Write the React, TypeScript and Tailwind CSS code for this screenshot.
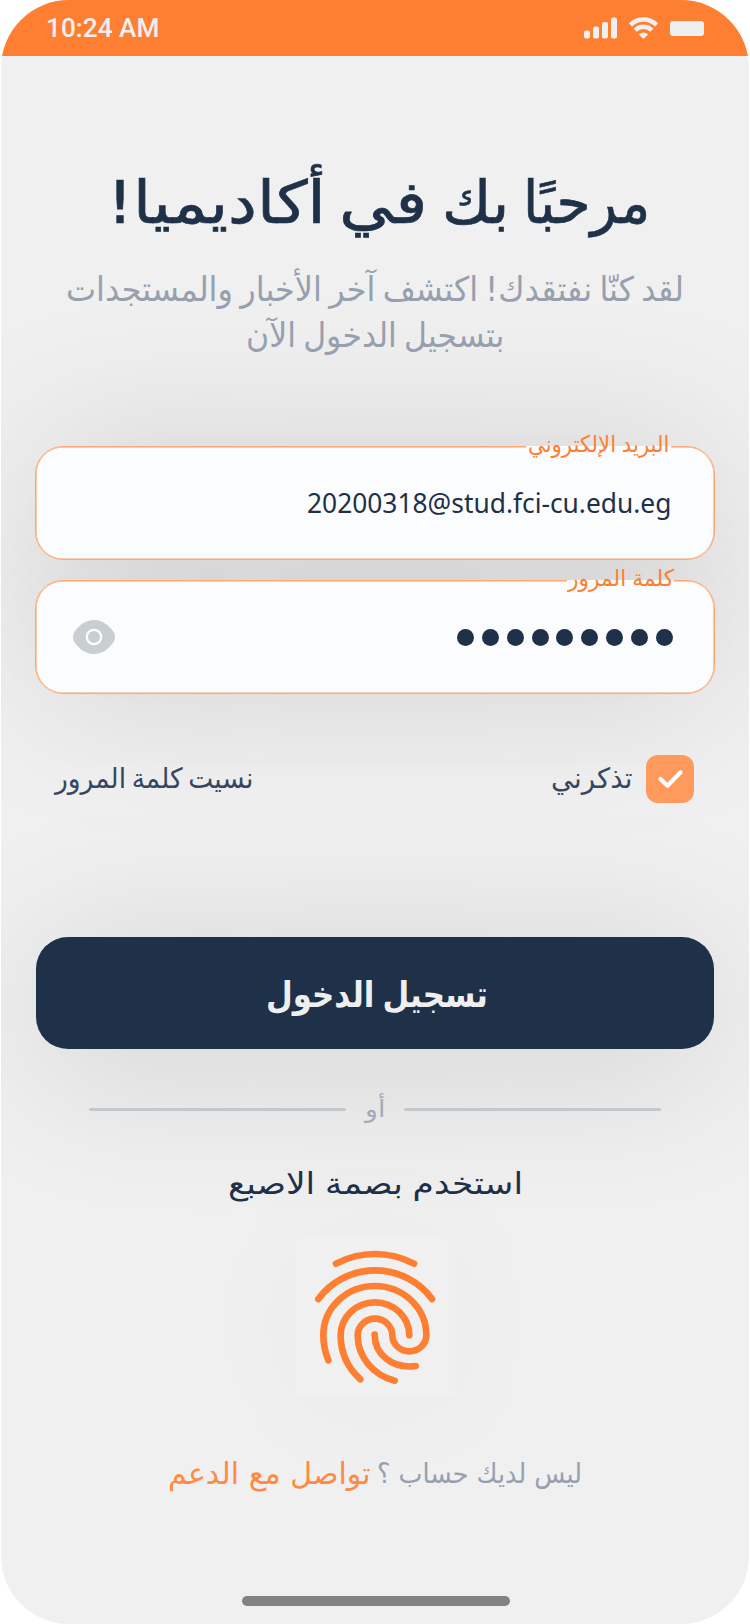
import { useLayoutEffect, useRef, useState } from "react";
import type { ReactNode } from "react";

/** One line of text stretched or condensed horizontally to fill the width of its box. */
function FitLine({ className, children, dir = "rtl" }: { className: string; children: ReactNode; dir?: "rtl" | "ltr" }) {
  const box = useRef<HTMLDivElement>(null);
  const line = useRef<HTMLSpanElement>(null);
  const [ratio, setRatio] = useState(1);
  useLayoutEffect(() => {
    if (box.current && line.current) {
      setRatio(box.current.offsetWidth / line.current.offsetWidth);
    }
  }, []);
  return (
    <div ref={box} dir="ltr" className={`shrink-0 whitespace-nowrap ${className}`}>
      <span ref={line} dir={dir} className="inline-block origin-left" style={{ transform: `scaleX(${ratio})` }}>
        {children}
      </span>
    </div>
  );
}

function StatusBar() {
  return (
    <div className="flex h-14 shrink-0 items-center justify-between bg-[#ff7f32] pr-[45px] pl-[45px] text-[#efefef]">
      <FitLine dir="ltr" className="w-[113px] font-['Roboto',sans-serif] text-[26px] leading-[56px] font-medium">
        10:24 AM
      </FitLine>
      <div className="flex items-center">
        <svg className="mr-3 h-[22px] w-[33px]" viewBox="0 0 33 22" fill="currentColor">
          <rect x="0" y="13.5" width="6" height="8" rx="2" />
          <rect x="9" y="9.5" width="6" height="12" rx="2" />
          <rect x="18" y="5" width="6" height="16.5" rx="2" />
          <rect x="27" y="0.5" width="6" height="21" rx="2" />
        </svg>
        <svg className="mr-3 h-[22px] w-[29px]" viewBox="0 0 29 22" fill="none" stroke="currentColor" strokeWidth="4.4">
          <path d="M1.5 7.9A18.5 18.5 0 0 1 27.5 7.9" />
          <path d="M6.2 13.2A11.6 11.6 0 0 1 22.8 13.2" />
          <path d="M14.5 22L9.9 17.4A6.6 6.6 0 0 1 19.1 17.4Z" fill="currentColor" stroke="none" />
        </svg>
        <div className="h-[15px] w-[34px] rounded-[3px] bg-[#efefef]" />
      </div>
    </div>
  );
}

function Eye() {
  return (
    <svg className="h-[34px] w-[42px]" viewBox="0 0 42 34">
      <path d="M21 0C31 0 37 7 40.6 12Q43.4 17 40.6 22C37 27 31 34 21 34S5 27 1.4 22Q-1.4 17 1.4 12C5 7 11 0 21 0Z" fill="#c9cfcf" />
      <circle cx="21" cy="17" r="7.2" fill="none" stroke="#fbfcfe" strokeWidth="2.3" />
    </svg>
  );
}

function Fingerprint() {
  return (
    <div className="mx-auto size-40 shrink-0 bg-[#f0f0f0] shadow-[0_4px_160px_rgba(0,0,0,0.03)]">
      <svg className="size-40" viewBox="0 0 480 480" fill="none" stroke="#ff7f32" strokeWidth="20" strokeLinecap="round">
        <path d="M123 80A250 250 0 0 1 357 80" />
        <path d="M70 186A212 212 0 0 1 411 186" />
        <path d="M100 370C90 345 85 320 85 295A154.5 148 0 0 1 394 295A51 48 0 0 1 292 295A52 50 0 0 0 188 295C188 360 235 415 299 431" />
        <path d="M196 427C155 390 137 345 137 295A103 99 0 0 1 343 295" />
        <path d="M239 293C239 350 290 397 362 387" />
      </svg>
    </div>
  );
}

/** Soft shadow the size of a field, kept behind both fields. */
function FieldShadow({ className }: { className: string }) {
  return <div className={`absolute inset-x-[34px] h-[114px] rounded-[28px] ${className}`} />;
}

const fieldClass =
  "relative flex h-[114px] shrink-0 items-center rounded-[28px] border border-[#ffa673] bg-[#fbfcfe] shadow-[inset_0_0_0_0.6px_#ffa673]";

export default function App() {
  return (
    <div className="h-[1624px] w-[750px] bg-white px-px font-['DejaVu_Sans',sans-serif] text-[#1e3148]">
      <div className="flex h-[1624px] w-[748px] flex-col overflow-hidden rounded-[68px] bg-[#f0f0f0]">
        <StatusBar />

        <h1 dir="rtl" className="z-10 mt-[107px] mr-[99px] flex text-[59px] leading-[80px] [-webkit-text-stroke:0.7px_#1e3148]">
          <FitLine className="w-[127px]">مرحبًا</FitLine>
          <FitLine className="mr-3.5 w-[67px]">بك</FitLine>
          <FitLine className="mr-[15px] w-[88px]">في</FitLine>
          <FitLine className="mr-[13px] w-[219px]">أكاديميا!</FitLine>
        </h1>

        <div className="z-10 mt-[23px] text-[34px] leading-[46px] text-[#96a0af] [word-spacing:-3px]">
          <FitLine className="ml-[65px] w-[618px]">لقد كنّا نفتقدك! اكتشف آخر الأخبار والمستجدات</FitLine>
          <FitLine className="ml-[245px] w-[258px]">بتسجيل الدخول الآن</FitLine>
        </div>

        <form className="relative mt-[88px] flex flex-col gap-5 px-[34px]">
          <FieldShadow className="top-0 shadow-[0_0_160px_rgba(0,0,0,0.13)]" />
          <FieldShadow className="top-[134px] shadow-[0_0_160px_rgba(0,0,0,0.13)]" />
          <div className={`${fieldClass} justify-end pr-[43px]`}>
            <div className="absolute -top-px right-[43px] h-0.5 w-[145px] bg-[#fbfcfe]" />
            <div className="absolute -top-[18px] right-[45px] text-[23px] leading-[30px] text-[#ff7f32] [word-spacing:-1px]">
              <FitLine className="w-[141px]">البريد الإلكتروني</FitLine>
            </div>
            <FitLine dir="ltr" className="w-[364px] font-['Noto_Sans',sans-serif] text-[27px] leading-9">
              20200318@stud.fci-cu.edu.eg
            </FitLine>
          </div>
          <div className={`${fieldClass} justify-between pr-[41px] pl-[37px]`}>
            <div className="absolute -top-px right-10 h-0.5 w-[107px] bg-[#fbfcfe]" />
            <div className="absolute -top-[18px] right-10 text-[23px] leading-[30px] text-[#ff7f32] [word-spacing:-1px]">
              <FitLine className="w-[106px]">كلمة المرور</FitLine>
            </div>
            <Eye />
            <div className="flex gap-[7.9px]">
              {Array.from({ length: 9 }, (_, i) => (
                <span key={i} className="size-[17px] rounded-full bg-[#1e3148]" />
              ))}
            </div>
          </div>
        </form>

        <div className="z-10 mt-[61px] flex h-12 shrink-0 items-center pr-[55px] pl-[54px] text-[28px] leading-[42px] text-[#34475e] [word-spacing:-3px]">
          <FitLine className="w-[198px]">نسيت كلمة المرور</FitLine>
          <FitLine className="ml-[298px] w-[81px]">تذكرني</FitLine>
          <div className="ml-auto flex size-12 items-center justify-center rounded-[12px] bg-[#ff9a5c]">
            <svg className="size-12" viewBox="0 0 48 48" fill="none" stroke="white" strokeWidth="4.2" strokeLinecap="round" strokeLinejoin="round">
              <path d="M14.5 24L21.5 30.8L34.5 17.3" />
            </svg>
          </div>
        </div>

        <button className="mx-[35px] mt-[134px] flex h-28 shrink-0 items-center justify-center rounded-[32px] bg-[#1e3148] pt-1 pl-1 text-[#efefef] shadow-[0_16px_160px_rgba(0,0,0,0.14)]">
          <FitLine className="w-[222px] text-left text-[36px] leading-[56px] font-bold [word-spacing:-3px]">تسجيل الدخول</FitLine>
        </button>

        <div className="z-10 mt-[44px] flex h-8 shrink-0 items-center justify-center text-[24px] leading-8 text-[#a3abb8]">
          <div className="h-[3px] w-[257px] rounded-full bg-[#c2c8ce]" />
          <FitLine className="mx-[19px] w-5">أو</FitLine>
          <div className="h-[3px] w-[257px] rounded-full bg-[#c2c8ce]" />
        </div>

        <FitLine className="z-10 mx-auto mt-[39px] w-[295px] text-[30px] leading-[40px] [word-spacing:-1px]">استخدم بصمة الاصبع</FitLine>

        <div className="z-10 mt-[33px] flex">
          <Fingerprint />
        </div>

        <div className="z-10 mt-[57px] flex h-10 shrink-0 items-center pl-[167px] leading-10">
          <FitLine className="w-[203px] text-[30px] text-[#ff8a43]">تواصل مع الدعم</FitLine>
          <FitLine className="ml-1.5 w-[205px] text-[27px] text-[#96a0af]">ليس لديك حساب ؟</FitLine>
        </div>

        <div className="mt-[102px] ml-[241px] h-2.5 w-[268px] shrink-0 rounded-full bg-[#828282]" />
      </div>
    </div>
  );
}
